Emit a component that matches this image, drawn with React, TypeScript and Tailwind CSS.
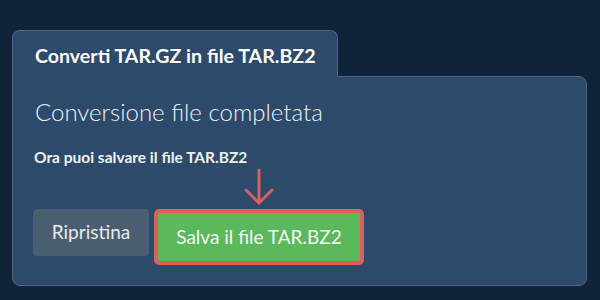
export default function App() {
  return (
    <div
      className="w-[600px] h-[300px] bg-[#112339] pl-[12px] pt-[30px] pr-[13px]"
      style={{ fontFamily: "Lato, 'Noto Sans', sans-serif" }}
    >
      <div className="relative z-10 -mb-px flex h-[47px] w-[326px] items-center rounded-t-lg border border-b-0 border-[#4c6889] bg-[#2d4a6b] pl-[22px] pt-[3px]">
        <span className="text-[19.6px] font-bold text-white">Converti TAR.GZ in file TAR.BZ2</span>
      </div>
      <div className="h-[210px] rounded-b-lg rounded-tr-lg border border-[#4c6889] bg-[#2d4a6b] pl-[22px] pt-[20px]">
        <h2 className="text-[24px] font-light leading-[30px] text-[#eef2f6]">Conversione file completata</h2>
        <p className="mt-[20px] text-[15.5px] font-bold leading-[20px] text-[#eef2f6] -ml-[1px]">Ora puoi salvare il file TAR.BZ2</p>
        <div className="mt-[42px] flex items-start gap-[5px] -ml-[2px]">
          <button className="h-[47px] w-[116px] rounded-[4px] bg-[#4b5d70] text-[19px] font-normal text-[#e6ebf0]">Ripristina</button>
          <div className="relative">
            <svg
              className="absolute bottom-full left-1/2 mb-[3px] -translate-x-1/2"
              width="30"
              height="38"
              viewBox="0 0 30 38"
              fill="none"
              stroke="#d9605c"
              strokeWidth="3"
              strokeLinecap="round"
            >
              <path d="M15 2 V34" />
              <path d="M2 22 L15 35 L28 22" />
            </svg>
            <button className="h-[56px] w-[210px] rounded-[5px] border-[4px] border-[#d9605c] bg-[#5cb85c] text-[19px] font-normal text-[#f4f8f4]">
              Salva il file TAR.BZ2
            </button>
          </div>
        </div>
      </div>
    </div>
  );
}
